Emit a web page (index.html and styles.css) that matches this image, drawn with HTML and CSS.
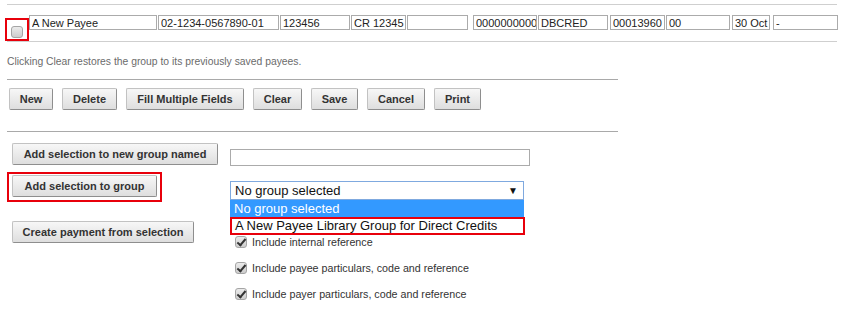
FILE: index.html
```html
<!DOCTYPE html>
<html lang="en">
<head>
  <meta charset="UTF-8" />
  <title>Payee Library Group</title>
  <link rel="stylesheet" href="styles.css">
</head>
<body>
  <div class="page">
    <hr class="rule-light">

    <!-- Payee row -->
    <div class="payee-row">
      <div class="pick-cell highlight"><span class="cb"></span></div>
      <input class="field f-name" type="text" value="A New Payee">
      <input class="field f-acct" type="text" value="02-1234-0567890-01">
      <input class="field f-num" type="text" value="123456">
      <input class="field f-ref" type="text" value="CR 12345">
      <input class="field f-blank" type="text" value="">
      <input class="field f-zero" type="text" value="0000000000">
      <input class="field f-code" type="text" value="DBCRED">
      <input class="field f-seq" type="text" value="00013960">
      <input class="field f-oo" type="text" value="00">
      <input class="field f-date" type="text" value="30 Oct">
      <input class="field f-dash" type="text" value="-">
    </div>
    <hr class="rule-light">

    <p class="note">Clicking Clear restores the group to its previously saved payees.</p>

    <hr class="rule">
    <div class="toolbar">
      <button class="btn b-new">New</button>
      <button class="btn b-delete">Delete</button>
      <button class="btn b-fill">Fill Multiple Fields</button>
      <button class="btn b-clear">Clear</button>
      <button class="btn b-save">Save</button>
      <button class="btn b-cancel">Cancel</button>
      <button class="btn b-print">Print</button>
    </div>
    <hr class="rule rule-low">

    <!-- Group actions -->
    <div class="group-form">
      <div class="cell-left r1">
        <button class="btn b-newgroup">Add selection to new group named</button>
      </div>
      <div class="cell-right r1">
        <input class="field group-name" type="text" value="">
      </div>

      <div class="cell-left r2">
        <div class="highlight btn-frame">
          <button class="btn b-addgroup">Add selection to group</button>
        </div>
      </div>
      <div class="cell-right r2">
        <div class="select-wrap">
          <div class="select">
            <span>No group selected</span>
            <span class="arrow">&#9660;</span>
          </div>
          <ul class="listbox">
            <li class="option active">No group selected</li>
            <li class="option highlight">A New Payee Library Group for Direct Credits</li>
          </ul>
        </div>
      </div>

      <div class="cell-left r3">
        <button class="btn b-payment">Create payment from selection</button>
      </div>
      <div class="cell-right r3">
        <label class="check-line"><span class="cb checked"></span>Include internal reference</label>
        <label class="check-line"><span class="cb checked"></span>Include payee particulars, code and reference</label>
        <label class="check-line"><span class="cb checked"></span>Include payer particulars, code and reference</label>
      </div>
    </div>
  </div>
</body>
</html>
```

FILE: styles.css
```css
body {
  margin: 0;
  padding: 0;
  font-family: "Liberation Sans", Arial, sans-serif;
  color: #333;
  background: #fff;
}

.page {
  padding: 4px 7px 0 7px;
}

hr {
  margin: 0;
  border: none;
  height: 1px;
}

.rule-light {
  background: #cfcfcf;
}

.rule {
  width: 611px;
  background: #a9a9a9;
  margin-top: 11px;
}

.rule-low {
  margin-top: 21px;
}

.highlight {
  border: 2px solid #e8000b;
}

/* payee row */
.payee-row {
  display: flex;
  align-items: flex-start;
  margin-top: 10px;
  margin-left: -2px;
}

.payee-row > * {
  flex: none;
}

.pick-cell {
  width: 24px;
  height: 23px;
  margin-top: 3px;
  padding: 4px 0 0 4px;
  box-sizing: border-box;
}

.field {
  height: 15px;
  box-sizing: border-box;
  border: 1px solid #ababab;
  padding: 0 0 0 2px;
  font-family: "Liberation Sans", Arial, sans-serif;
  font-size: 11px;
  color: #222;
  background: #fff;
  outline: none;
  margin: 0;
}

.f-name  { width: 128px; }
.f-acct  { width: 121px; margin-left: 1px; }
.f-num   { width: 70px;  margin-left: 1px; }
.f-ref   { width: 55px;  margin-left: 1px; }
.f-blank { width: 61px;  margin-left: 1px; }
.f-zero  { width: 64px;  margin-left: 5px; }
.f-code  { width: 70px;  margin-left: 1px; }
.f-seq   { width: 55px;  margin-left: 2px; }
.f-oo    { width: 64px;  margin-left: 1px; }
.f-date  { width: 38px;  margin-left: 2px; }
.f-dash  { width: 65px;  margin-left: 3px; }

/* checkboxes */
.cb {
  display: inline-block;
  position: relative;
  width: 12px;
  height: 12px;
  box-sizing: border-box;
  border: 1px solid #a5a5a5;
  border-radius: 3px;
  background: linear-gradient(#ebebeb, #cdcdcd);
  flex: none;
}

.cb.checked::after {
  content: "";
  position: absolute;
  left: 3px;
  top: 0;
  width: 3px;
  height: 7px;
  border: solid #333;
  border-width: 0 2px 2px 0;
  transform: rotate(40deg);
}

.note {
  margin: 14px 0 0 0;
  font-size: 10.35px;
  line-height: 12px;
  color: #6b6b6b;
}

/* buttons */
.toolbar {
  display: flex;
  gap: 9px;
  margin-top: 8px;
  padding-left: 2px;
}

.btn {
  height: 22px;
  padding: 0;
  white-space: nowrap;
  font-family: "Liberation Sans", Arial, sans-serif;
  font-size: 11px;
  font-weight: bold;
  color: #333;
  background: linear-gradient(#f7f7f7, #dedede);
  border: 1px solid;
  border-color: #c2c2c2 #8e8e8e #8e8e8e #c2c2c2;
  border-radius: 2px;
  cursor: pointer;
  flex: none;
}

.b-new    { width: 44px; }
.b-delete { width: 55px; }
.b-fill   { width: 118px; }
.b-clear  { width: 49px; }
.b-save   { width: 47px; }
.b-cancel { width: 58px; }
.b-print  { width: 47px; }

/* group form */
.group-form {
  display: grid;
  grid-template-columns: 223px 1fr;
  align-items: start;
}

.group-form .btn,
.group-form .field {
  display: block;
}

.b-newgroup,
.b-payment {
  margin-left: 5px !important;
}

.b-newgroup { width: 206px; }
.b-addgroup { width: 145px; }
.b-payment  { width: 182px; }

.r1.cell-left  { padding-top: 11px; }
.r1.cell-right { padding-top: 17px; }

.group-name {
  width: 300px;
  height: 17px;
}

.r2.cell-left  { padding-top: 6px; }
.r2.cell-right { padding-top: 15px; }

.btn-frame {
  width: 155px;
  box-sizing: border-box;
  padding: 1px 3px 3px 3px;
}

.r3.cell-left  { padding-top: 19px; }
.r3.cell-right { padding-top: 27px; }

.select-wrap {
  position: relative;
  width: 294px;
}

.select {
  display: flex;
  justify-content: space-between;
  align-items: center;
  height: 19px;
  box-sizing: border-box;
  border: 1px solid #7fa9df;
  padding: 0 4px 0 4px;
  font-size: 13px;
  color: #111;
  background: #fff;
}

.arrow {
  font-size: 10px;
  color: #111;
  margin-right: 1px;
}

.listbox {
  position: absolute;
  top: 19px;
  left: 0;
  z-index: 5;
  width: 295px;
  margin: 0;
  padding: 0;
  list-style: none;
  background: #fff;
}

.option {
  height: 17px;
  line-height: 17px;
  padding: 0 4px;
  font-size: 13px;
  color: #111;
  box-sizing: border-box;
}

.option.active {
  background: #3399ff;
  color: #fff;
  width: 294px;
}

.option.highlight {
  height: 18px;
  line-height: 14px;
  padding: 0 3px;
}

.check-line {
  display: flex;
  align-items: center;
  gap: 5px;
  height: 26px;
  padding-left: 5px;
  font-size: 10.7px;
  color: #333;
}
```
